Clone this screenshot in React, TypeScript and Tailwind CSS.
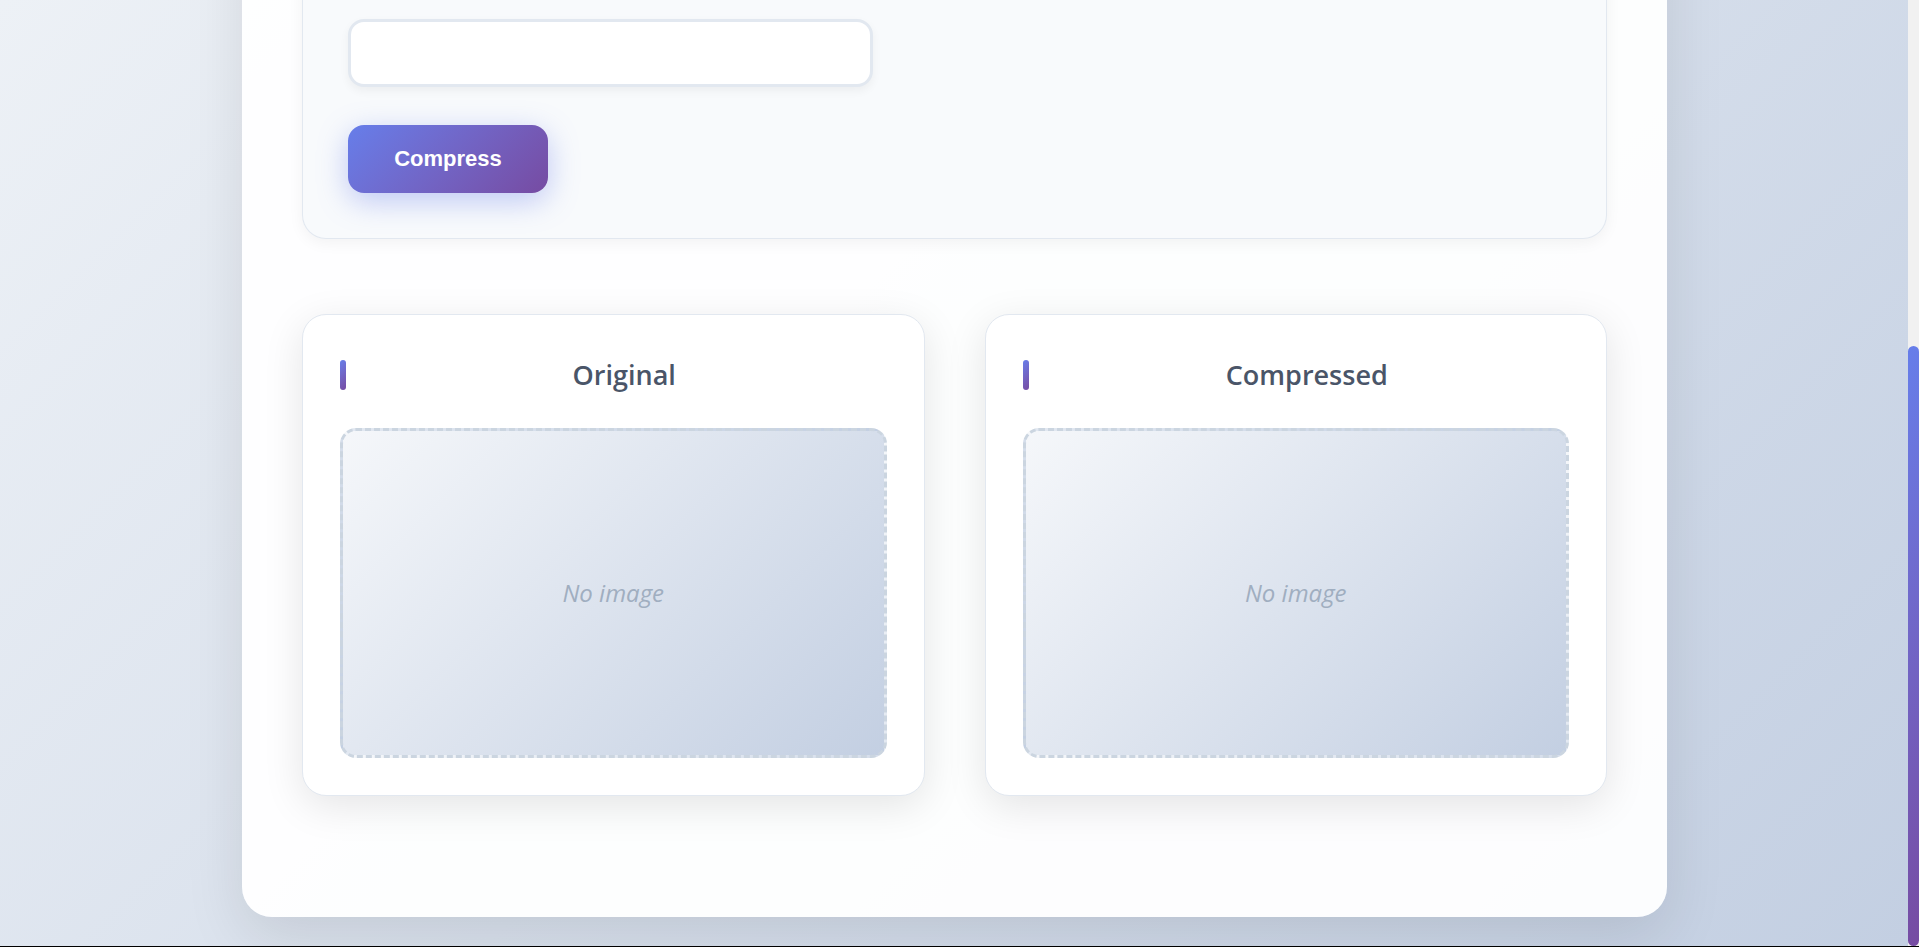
function ImageCard({ title }: { title: string }) {
  return (
    <section className="flex-1 rounded-3xl border border-[#e2e8f0] bg-white p-[37px] shadow-[0_10px_40px_rgba(0,0,0,0.1)]">
      <h2 className="mb-[30px] flex h-[46px] items-center gap-4 font-['Open_Sans',sans-serif] text-[27px] font-semibold text-[#4a5568]">
        <span className="h-[30px] w-[6px] rounded-[3px] bg-linear-135 from-[#667eea] to-[#764ba2]" />
        <span className="flex-1 text-center">{title}</span>
      </h2>
      <div className="flex h-[330px] items-center justify-center rounded-2xl border-3 border-dashed border-[#cbd5e0] bg-[linear-gradient(135deg,#f5f7fa_0%,#c3cfe2_100%)] font-['Open_Sans',sans-serif] text-[24px] text-[#a0aec0] italic">
        No image
      </div>
    </section>
  );
}

export default function App() {
  return (
    <div className="flex h-screen overflow-hidden border-b border-black">
      <main className="flex flex-1 flex-col overflow-hidden bg-[linear-gradient(135deg,#edf1f6_0%,#c3cfe2_100%)] pr-[241px] pb-[29px] pl-[242px]">
        <div className="-mt-[100px] flex flex-1 flex-col rounded-b-[30px] bg-white/95 px-[60px] pt-[72px] shadow-[0_20px_60px_rgba(0,0,0,0.1)]">
          <form
            className="rounded-b-3xl border border-t-0 border-[#e2e8f0] bg-[#f8fafc] px-[45px] pt-[47px] pb-[45px] shadow-[0_4px_15px_rgba(0,0,0,0.05)]"
            onSubmit={(e) => e.preventDefault()}
          >
            <input
              type="text"
              aria-label="Value"
              className="block h-[68px] w-[525px] rounded-2xl border-3 border-[#e2e8f0] bg-white px-5 text-[22px] shadow-[0_4px_10px_rgba(0,0,0,0.05)]"
            />
            <button
              type="submit"
              className="mt-[38px] block h-[68px] w-[200px] rounded-2xl bg-linear-135 from-[#667eea] to-[#764ba2] pb-[2px] font-['Liberation_Sans',sans-serif] text-[22px] font-bold text-white shadow-[0_8px_30px_rgba(102,126,234,0.4)]"
            >
              Compress
            </button>
          </form>
          <div className="mt-[75px] flex gap-[60px]">
            <ImageCard title="Original" />
            <ImageCard title="Compressed" />
          </div>
        </div>
      </main>
      <div className="flex w-[11px] flex-col justify-end bg-[#f1f1f1]">
        <div className="h-[600px] rounded-md bg-linear-135 from-[#667eea] to-[#764ba2]" />
      </div>
    </div>
  );
}
